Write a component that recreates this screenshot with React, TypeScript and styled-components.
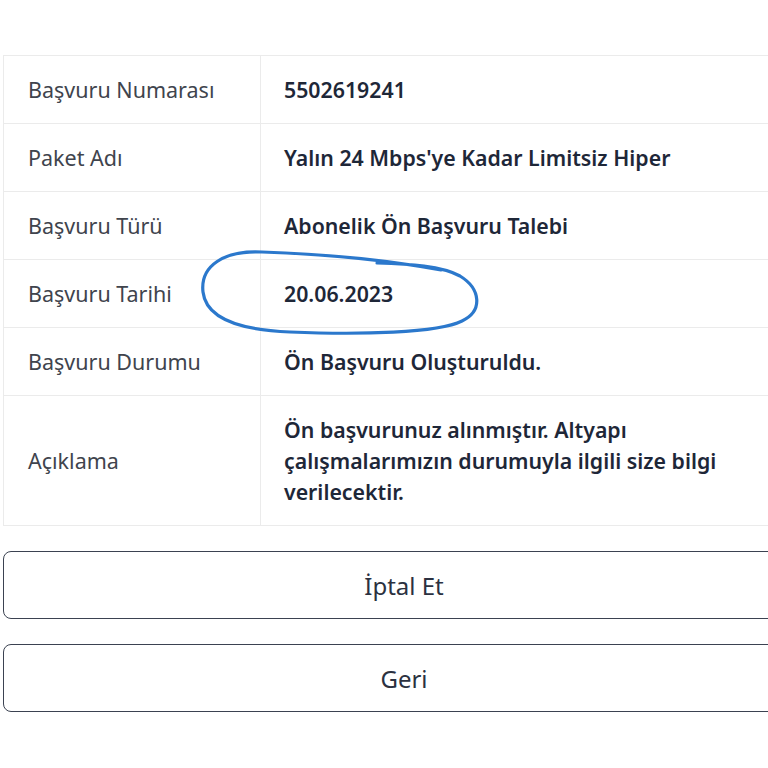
import styled, { createGlobalStyle } from "styled-components";

const GlobalStyle = createGlobalStyle`
  html, body {
    margin: 0;
    padding: 0;
    background: #fff;
    overflow: hidden;
  }
  body {
    font-family: "Noto Sans", "Open Sans", sans-serif;
  }
`;

type Row = { label: string; value: React.ReactNode; tall?: boolean };

const rows: Row[] = [
  { label: "Başvuru Numarası", value: "5502619241" },
  { label: "Paket Adı", value: "Yalın 24 Mbps'ye Kadar Limitsiz Hiper" },
  { label: "Başvuru Türü", value: "Abonelik Ön Başvuru Talebi" },
  { label: "Başvuru Tarihi", value: "20.06.2023" },
  { label: "Başvuru Durumu", value: "Ön Başvuru Oluşturuldu." },
  {
    label: "Açıklama",
    value: (
      <>
        Ön başvurunuz alınmıştır. Altyapı
        <br />
        çalışmalarımızın durumuyla ilgili size bilgi
        <br />
        verilecektir.
      </>
    ),
    tall: true,
  },
];

export default function App() {
  return (
    <>
      <GlobalStyle />
      <Page>
        <DetailTable>
          <tbody>
            {rows.map((r) => (
              <tr key={r.label}>
                <LabelCell $tall={r.tall}>{r.label}</LabelCell>
                <ValueCell $tall={r.tall}>{r.value}</ValueCell>
              </tr>
            ))}
          </tbody>
        </DetailTable>
        <Actions>
          <ActionButton>İptal Et</ActionButton>
          <ActionButton>Geri</ActionButton>
        </Actions>
        <Scribble viewBox="0 0 802 768" width="802" height="768">
          <path
            d="M 377 263 C 410 264, 442 266, 460 276 C 481 289, 483 311, 462 321 C 438 333, 360 335, 290 332 C 240 330, 206 318, 203 292 C 200 266, 224 250, 262 252 C 320 254, 382 259, 441 270"
            fill="none"
            stroke="#2b78cc"
            strokeWidth="3.2"
            strokeLinecap="round"
          />
        </Scribble>
      </Page>
    </>
  );
}

const Page = styled.div`
  position: relative;
  width: 802px;
  padding: 55px 0 0 3px;
`;

const DetailTable = styled.table`
  width: 100%;
  border-collapse: collapse;
  border-top: 1px solid #ebebeb;
  border-left: 1px solid #ebebeb;
`;

const LabelCell = styled.td<{ $tall?: boolean }>`
  width: 232px;
  height: ${(p) => (p.$tall ? 129 : 67)}px;
  padding: 0 0 0 24px;
  border-bottom: 1px solid #ebebeb;
  border-right: 1px solid #ebebeb;
  font-size: 21.5px;
  color: #40444d;
  vertical-align: middle;
`;

const ValueCell = styled.td<{ $tall?: boolean }>`
  height: ${(p) => (p.$tall ? 129 : 67)}px;
  padding: 0 0 0 23px;
  border-bottom: 1px solid #ebebeb;
  font-size: 21.3px;
  font-weight: 600;
  line-height: ${(p) => (p.$tall ? "31px" : "normal")};
  color: #1e2738;
  vertical-align: middle;
`;

const Actions = styled.div`
  display: flex;
  flex-direction: column;
  gap: 25px;
  margin-top: 25px;
`;

const ActionButton = styled.button`
  height: 68px;
  width: 100%;
  background: #fff;
  border: 1.5px solid #3b4251;
  border-radius: 8px;
  font-family: "Noto Sans", "Open Sans", sans-serif;
  font-size: 24px;
  color: #2b3140;
  cursor: pointer;
`;

const Scribble = styled.svg`
  position: absolute;
  left: 0;
  top: 0;
  pointer-events: none;
`;
